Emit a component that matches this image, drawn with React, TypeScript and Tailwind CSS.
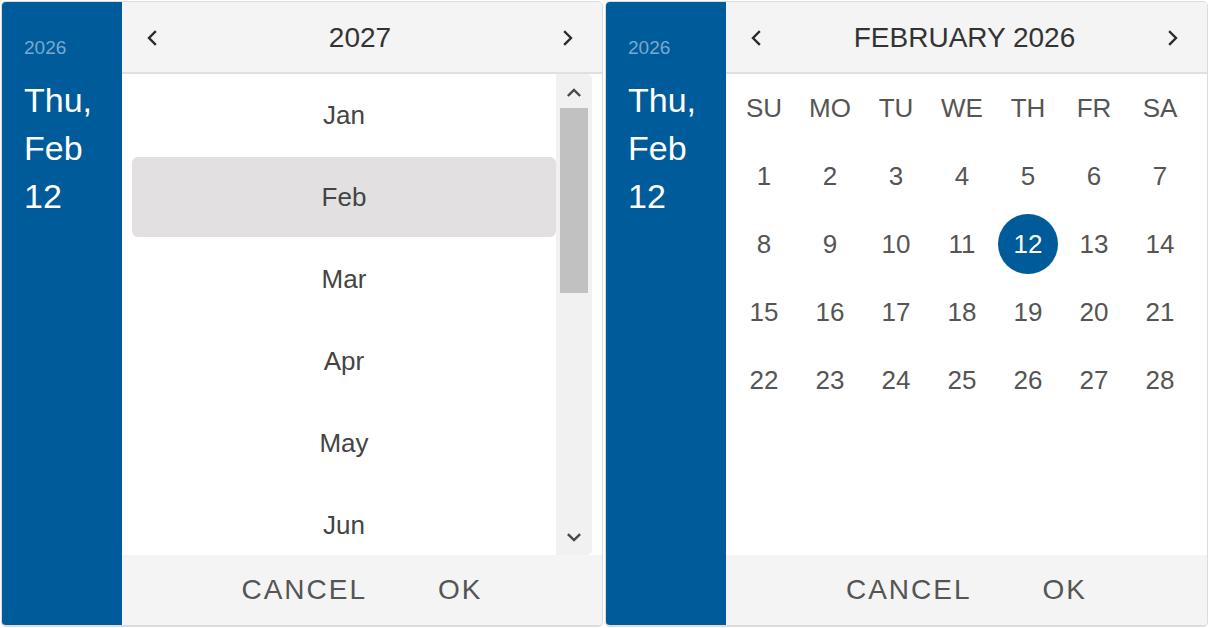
const BLUE = "bg-[#005b9a]";

function Chevron({ dir }: { dir: "left" | "right" | "up" | "down" }) {
  const pts =
    dir === "left"
      ? "8,2 2,8 8,14"
      : dir === "right"
        ? "2,2 8,8 2,14"
        : dir === "up"
          ? "2,8 8,2 14,8"
          : "2,2 8,8 14,2";
  const small = dir === "up" || dir === "down";
  return (
    <svg
      width={small ? 14 : 10}
      height={small ? 9 : 16}
      viewBox={small ? "0 0 16 10" : "0 0 10 16"}
      fill="none"
      stroke={small ? "#4a4a4a" : "#2b2b2b"}
      strokeWidth={small ? 2.8 : 2.4}
      strokeLinecap="square"
    >
      <polyline points={pts} />
    </svg>
  );
}

function Sidebar() {
  return (
    <div className={`w-[120px] shrink-0 ${BLUE} pl-[22px] pt-[34px] text-white`}>
      <div className="text-[19px] leading-[24px] text-[#78a9d1]">2026</div>
      <div className="mt-[16px] text-[34px] leading-[48px]">
        Thu,
        <br />
        Feb
        <br />
        12
      </div>
    </div>
  );
}

function Header({ title }: { title: string }) {
  return (
    <div className="flex h-[72px] shrink-0 items-center justify-between border-b-2 border-[#e0e0e0] bg-[#f4f4f4] pl-[25px] pr-[29px] pt-[1px]">
      <Chevron dir="left" />
      <span className="text-[28px] text-[#333]">{title}</span>
      <Chevron dir="right" />
    </div>
  );
}

function Footer() {
  return (
    <div className="flex h-[70px] shrink-0 items-center justify-center gap-[71px] bg-[#f4f4f4] text-[28px] tracking-[2px] text-[#555]">
      <span>CANCEL</span>
      <span>OK</span>
    </div>
  );
}

function Card({ children, wide }: { children: React.ReactNode; wide?: boolean }) {
  return (
    <div
      className={`flex h-[626px] ${wide ? "w-[603px]" : "w-[602px]"} overflow-hidden rounded-[5px] border border-b-2 border-[#dcdcdc] bg-white`}
    >
      <Sidebar />
      <div className="flex min-w-0 flex-1 flex-col">{children}</div>
    </div>
  );
}

const MONTHS = ["Jan", "Feb", "Mar", "Apr", "May", "Jun"];

function MonthPicker() {
  return (
    <Card>
      <Header title="2027" />
      <div className="flex min-h-0 flex-1 pl-[10px] pr-[10px]">
        <div className="flex-1 overflow-hidden">
          {MONTHS.map((m) => (
            <div key={m} className="py-[1px]">
              <div
                className={`flex h-[80px] items-center justify-center rounded-[6px] text-[26px] text-[#444] ${
                  m === "Feb" ? "bg-[#e2e0e0] text-[#333]" : ""
                }`}
              >
                {m}
              </div>
            </div>
          ))}
        </div>
        <div className="flex w-[36px] shrink-0 flex-col items-center rounded-r-[5px] bg-[#f1f1f1]">
          <div className="flex h-[34px] items-center pt-[2px]">
            <Chevron dir="up" />
          </div>
          <div className="h-[185px] w-[28px] bg-[#c1c1c1]" />
          <div className="flex-1" />
          <div className="flex h-[22px] items-start">
            <Chevron dir="down" />
          </div>
        </div>
      </div>
      <Footer />
    </Card>
  );
}

const WEEK = ["SU", "MO", "TU", "WE", "TH", "FR", "SA"];

function Calendar() {
  const days = Array.from({ length: 28 }, (_, i) => i + 1);
  return (
    <Card wide>
      <Header title="FEBRUARY 2026" />
      <div className="min-h-0 flex-1 pl-[5px]">
        <div className="grid w-[462px] grid-cols-7">
          {WEEK.map((w) => (
            <div key={w} className="flex h-[68px] items-center justify-center text-[26px] text-[#555]">
              {w}
            </div>
          ))}
          {days.map((d) => (
            <div key={d} className="flex h-[68px] items-center justify-center">
              {d === 12 ? (
                <div className={`flex h-[60px] w-[60px] items-center justify-center rounded-full ${BLUE} text-[26px] text-white`}>
                  {d}
                </div>
              ) : (
                <span className="text-[26px] text-[#555]">{d}</span>
              )}
            </div>
          ))}
        </div>
      </div>
      <Footer />
    </Card>
  );
}

export default function App() {
  return (
    <div
      className="flex h-[628px] w-[1210px] gap-[2px] bg-white p-[1px]"
      style={{ fontFamily: '"Liberation Sans", Arial, sans-serif' }}
    >
      <MonthPicker />
      <Calendar />
    </div>
  );
}
